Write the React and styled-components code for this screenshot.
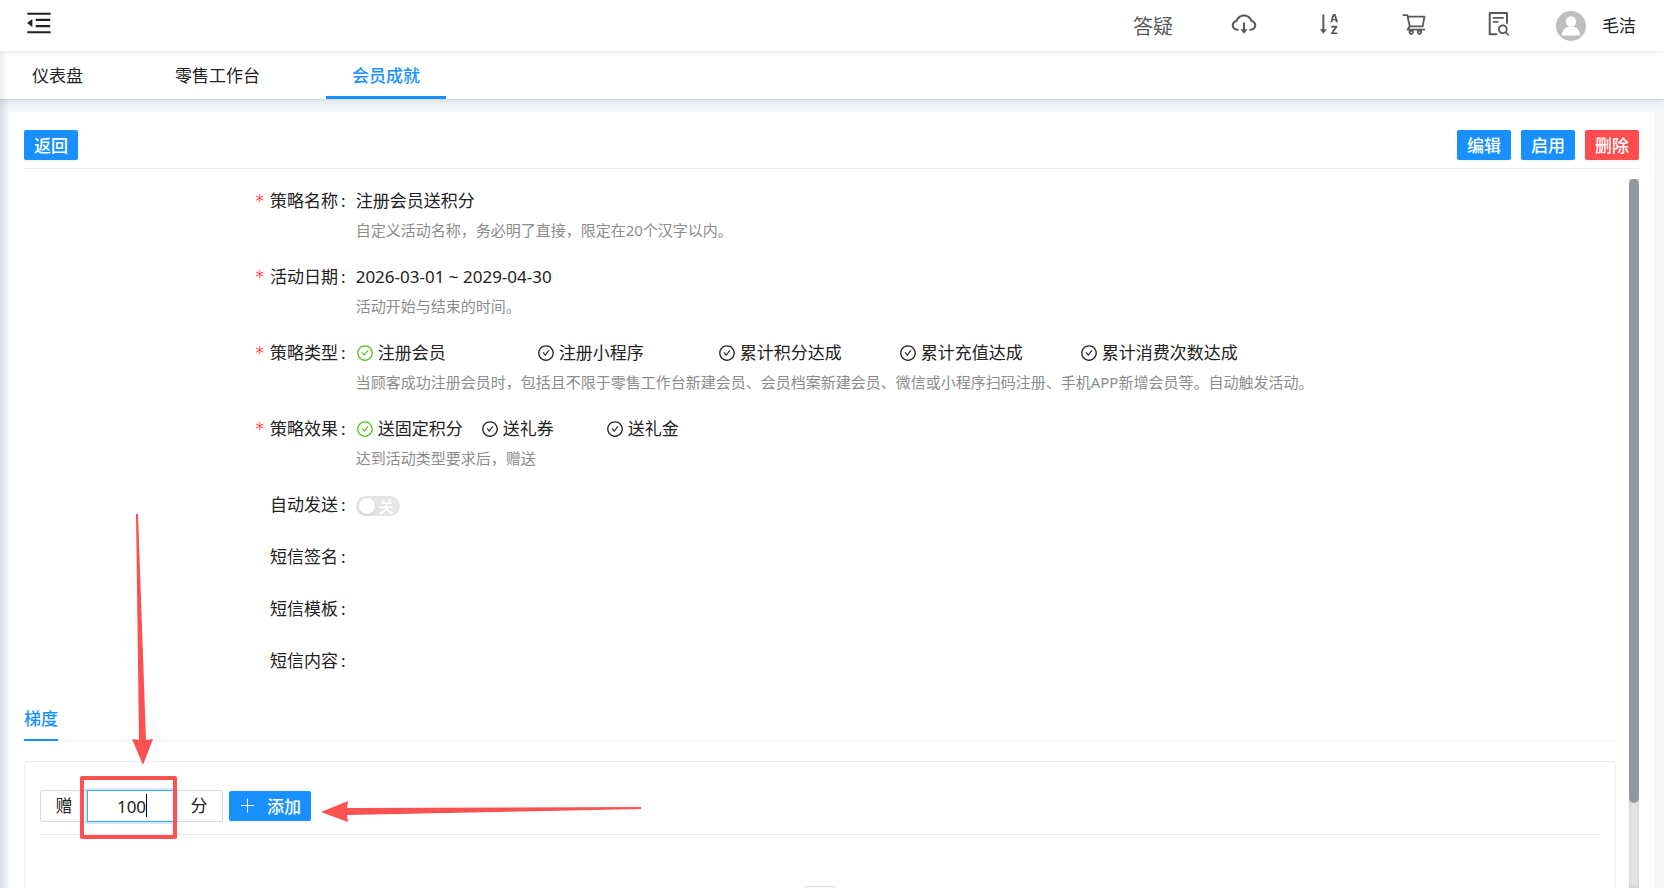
import React, { useState } from 'react';
import styled, { createGlobalStyle, css, ThemeProvider } from 'styled-components';
import {
    AiOutlineCheckCircle,
    AiOutlineCloudDownload,
    AiOutlineFileSearch,
    AiOutlineMenuFold,
    AiOutlineShoppingCart,
    AiOutlineSortAscending,
} from 'react-icons/ai';

const theme = {
    colors: {
        primary: '#1890ff',
        danger: '#ff4d4f',
        success: '#52c41a',
        mark: '#fa5151',
        text: '#222222',
        icon: '#595959',
        hint: '#8c8c8c',
        line: '#ededed',
        border: '#d9d9d9',
        page: '#f4f6fa',
    },
    sizes: {
        hint: '15px',
        body: '17px',
        title: '20px',
        icon: '28px',
    },
};

const GlobalStyle = createGlobalStyle`
  *, *::before, *::after {
    box-sizing: border-box;
  }
  body {
    margin: 0;
    font-family: 'Noto Sans', 'Noto Sans CJK SC', sans-serif;
    font-size: ${theme.sizes.body};
    color: ${theme.colors.text};
  }
  button, input {
    font: inherit;
    color: inherit;
  }
`;

const Page = styled.div`
  display: flex;
  flex-direction: column;
  height: 100vh;
  overflow: hidden;
  background: ${({ theme }) => theme.colors.page};
`;

const Header = styled.header`
  position: relative;
  z-index: 1;
  display: flex;
  align-items: center;
  flex: none;
  height: 51px;
  padding: 0 28px 0 24px;
  background: #fff;
  box-shadow: 0 1px 4px rgba(0, 21, 41, 0.1);
`;

const IconButton = styled.button`
  display: flex;
  justify-content: center;
  width: 28px;
  padding: 0 0 3px;
  border: 0;
  background: none;
  color: ${({ theme }) => theme.colors.icon};
  font-size: ${({ theme, $size }) => $size || theme.sizes.icon};
  cursor: pointer;
`;

const FoldButton = styled(IconButton)`
  width: 30px;
  margin-right: auto;
  padding-bottom: 5px;
  color: ${({ theme }) => theme.colors.text};
`;

const Tools = styled.nav`
  display: flex;
  align-items: center;
  gap: 57px;
`;

const HelpLink = styled.a`
  color: ${({ theme }) => theme.colors.icon};
  font-size: ${({ theme }) => theme.sizes.title};
  text-decoration: none;
`;

const User = styled.div`
  display: flex;
  align-items: center;
  gap: 16px;
  margin-left: 43px;
`;

const UserName = styled.span`
  padding-bottom: 3px;
`;

const TabBar = styled.nav`
  display: flex;
  flex: none;
  gap: 40px;
  height: 48px;
  padding-left: 6px;
  background: linear-gradient(to right, rgba(0, 21, 41, 0.08), transparent 8px) #fff;
  box-shadow: 0 1px 0 #d5d9df, 0 2px 8px rgba(0, 21, 41, 0.12);
`;

const Tab = styled.a`
  height: 48px;
  padding: 0 26px;
  line-height: 50px;
  color: inherit;
  text-decoration: none;
  ${({ $active, theme }) =>
        $active &&
        css`
      color: ${theme.colors.primary};
      font-weight: 500;
      box-shadow: inset 0 -3px ${theme.colors.primary};
    `}
`;

const Main = styled.main`
  display: flex;
  flex: 1;
  min-height: 0;
  padding: 13px 10px 0 9px;
  background: linear-gradient(to right, rgba(0, 21, 41, 0.12), transparent 9px);
`;

const Card = styled.section`
  display: flex;
  flex-direction: column;
  flex: 1;
  min-width: 0;
  padding: 18px 15px 0;
  background: #fff;
`;

const Actions = styled.div`
  display: flex;
  flex: none;
  gap: 10px;
  padding-bottom: 8px;
  border-bottom: 1px solid ${({ theme }) => theme.colors.line};
`;

const Button = styled.button`
  display: inline-flex;
  align-items: center;
  gap: 11px;
  height: 30px;
  padding: 0 10px 2px;
  border: 0;
  border-radius: 2px;
  background: ${({ theme, $danger }) => ($danger ? theme.colors.danger : theme.colors.primary)};
  box-shadow: 0 2px 0 rgba(0, 0, 0, 0.04);
  color: #fff;
  font-weight: 500;
  cursor: pointer;
`;

const BackButton = styled(Button)`
  margin-right: auto;
`;

const Body = styled.div`
  display: flex;
  flex: 1;
  gap: 13px;
  min-height: 0;
  margin-top: 10px;
`;

const Content = styled.div`
  flex: 1;
  min-width: 0;
  padding-top: 4px;
  overflow: hidden;
`;

const Scrollbar = styled.div`
  width: 10px;
  background: #e6e6e6;
  box-shadow: inset 0 0 5px rgba(0, 0, 0, 0.15);
`;

const Thumb = styled.div`
  height: 88%;
  border-radius: 5px;
  background: #92969e;
`;

const Row = styled.div`
  display: grid;
  grid-template-columns: 5fr 19fr;
  margin-bottom: ${({ $hinted }) => ($hinted ? '18px' : '16px')};
  line-height: 36px;
`;

const Label = styled.label`
  padding-right: 10px;
  text-align: right;
  &::after {
    content: ':';
    margin-left: 3px;
  }
  ${({ $required, theme }) =>
        $required &&
        css`
      &::before {
        content: '*';
        margin-right: 6px;
        color: ${theme.colors.danger};
        font-family: 'DejaVu Sans', sans-serif;
      }
    `}
`;

const Value = styled.div`
  min-height: 36px;
`;

const Hint = styled.p`
  margin: 0;
  color: ${({ theme }) => theme.colors.hint};
  font-size: ${({ theme }) => theme.sizes.hint};
  line-height: 22px;
`;

const Options = styled.ul`
  display: flex;
  margin: 0;
  padding: 0;
  list-style: none;
`;

const Option = styled.li`
  display: flex;
  align-items: center;
  gap: 4px;
  flex: 0 0 ${({ $width }) => $width};
  white-space: nowrap;
  svg {
    flex: none;
    font-size: 18px;
    color: ${({ theme, $checked }) => ($checked ? theme.colors.success : theme.colors.text)};
  }
`;

const SwitchTrack = styled.label`
  display: inline-flex;
  align-items: center;
  justify-content: space-between;
  width: 44px;
  height: 20px;
  padding: 0 6px 0 3px;
  border-radius: 10px;
  background: #e5e5e5;
  color: #fff;
  font-size: ${({ theme }) => theme.sizes.hint};
  font-weight: 500;
  line-height: 20px;
  vertical-align: middle;
`;

const SwitchInput = styled.input`
  appearance: none;
  width: 16px;
  height: 16px;
  margin: 0;
  border-radius: 50%;
  background: #fff;
  box-shadow: 0 2px 4px rgba(0, 35, 11, 0.1);
`;

const TierTabs = styled.div`
  display: flex;
  margin-bottom: 20px;
  padding-top: 11px;
  border-bottom: 1px solid ${({ theme }) => theme.colors.line};
`;

const TierTab = styled.button`
  margin-bottom: -1px;
  padding: 0 0 7px;
  border: 0;
  border-bottom: 2px solid ${({ theme }) => theme.colors.primary};
  background: none;
  color: ${({ theme }) => theme.colors.primary};
  font-weight: 500;
  line-height: 26px;
`;

const Panel = styled.div`
  padding: 28px 15px 0;
  border: 1px solid ${({ theme }) => theme.colors.line};
  border-radius: 2px;
`;

const TierForm = styled.form`
  position: relative;
  display: flex;
  align-items: center;
  gap: 6px;
  padding-bottom: 12px;
  border-bottom: 1px solid #e8e8e8;
`;

const InputGroup = styled.div`
  position: relative;
  display: flex;
  height: 32px;
`;

const Addon = styled.label`
  width: 48px;
  border: 1px solid ${({ theme }) => theme.colors.border};
  border-radius: 2px;
  line-height: 30px;
  text-align: center;
`;

const PointsInput = styled.input`
  width: 89px;
  margin: 0 -1px;
  padding: 0;
  border: 1px solid #40a9ff;
  outline: 0;
  background: #fff;
  box-shadow: 0 0 0 2px rgba(24, 144, 255, 0.2);
  text-align: center;
  caret-color: transparent;
  z-index: 1;
`;

const Caret = styled.span`
  position: absolute;
  z-index: 1;
  top: 4px;
  left: 106px;
  width: 1px;
  height: 23px;
  background: #000;
`;

const Highlight = styled.div`
  position: absolute;
  z-index: 2;
  top: -14px;
  left: 40px;
  width: 97px;
  height: 63px;
  border: 4px solid ${({ theme }) => theme.colors.mark};
  border-radius: 2px;
  pointer-events: none;
`;

const Arrows = styled.svg`
  position: absolute;
  top: -276px;
  left: 90px;
  fill: ${({ theme }) => theme.colors.mark};
  pointer-events: none;
`;

const Empty = styled.div`
  display: flex;
  justify-content: center;
  padding-top: 51px;
`;

const types = ['注册会员', '注册小程序', '累计积分达成', '累计充值达成', '累计消费次数达成'];
const effects = ['送固定积分', '送礼券', '送礼金'];

const Field = ({ label, required, hint, htmlFor, children }) => (
    <Row $hinted={Boolean(hint)}>
        <Label as={htmlFor ? 'label' : 'div'} htmlFor={htmlFor} $required={required}>
            {label}
        </Label>
        <div>
            <Value>{children}</Value>
            {hint && <Hint>{hint}</Hint>}
        </div>
    </Row>
);

const CheckList = ({ items, selected, width }) => (
    <Options>
        {items.map((item) => (
            <Option key={item} $width={width} $checked={item === selected}>
                <AiOutlineCheckCircle />
                {item}
            </Option>
        ))}
    </Options>
);

const Avatar = () => (
    <svg width="30" height="30" viewBox="0 0 30 30">
        <circle cx="15" cy="15" r="15" fill="#bfbfbf" />
        <circle cx="15" cy="10.500" r="5.200" fill="#fff" />
        <path d="M6 24.500c0-5 3-8 6.500-9q2.500 1.200 5 0c3.500 1 6.500 4 6.500 9z" fill="#fff" />
    </svg>
);

const PlusIcon = () => (
    <svg width="17" height="17" viewBox="0 0 17 17" stroke="currentColor">
        <path d="M8.500 1.500v14M2 8.500h13" />
    </svg>
);

const App = () => {
    const [points, setPoints] = useState('100');

    return (
        <ThemeProvider theme={theme}>
            <GlobalStyle />
            <Page>
                <Header>
                    <FoldButton $size="30px" aria-label="折叠菜单">
                        <AiOutlineMenuFold />
                    </FoldButton>
                    <Tools>
                        <HelpLink href="#help">答疑</HelpLink>
                        <IconButton aria-label="下载"><AiOutlineCloudDownload /></IconButton>
                        <IconButton aria-label="排序"><AiOutlineSortAscending /></IconButton>
                        <IconButton $size="26px" aria-label="购物车"><AiOutlineShoppingCart /></IconButton>
                        <IconButton aria-label="查询"><AiOutlineFileSearch /></IconButton>
                    </Tools>
                    <User>
                        <Avatar />
                        <UserName>毛洁</UserName>
                    </User>
                </Header>
                <TabBar>
                    <Tab href="#dashboard">仪表盘</Tab>
                    <Tab href="#retail">零售工作台</Tab>
                    <Tab href="#achievement" $active>会员成就</Tab>
                </TabBar>
                <Main>
                    <Card>
                        <Actions>
                            <BackButton>返回</BackButton>
                            <Button>编辑</Button>
                            <Button>启用</Button>
                            <Button $danger>删除</Button>
                        </Actions>
                        <Body>
                            <Content>
                                <Field label="策略名称" required hint="自定义活动名称，务必明了直接，限定在20个汉字以内。">
                                    注册会员送积分
                                </Field>
                                <Field label="活动日期" required hint="活动开始与结束的时间。">
                                    2026-03-01 ~ 2029-04-30
                                </Field>
                                <Field
                                    label="策略类型"
                                    required
                                    hint="当顾客成功注册会员时，包括且不限于零售工作台新建会员、会员档案新建会员、微信或小程序扫码注册、手机APP新增会员等。自动触发活动。"
                                >
                                    <CheckList items={types} selected="注册会员" width="181px" />
                                </Field>
                                <Field label="策略效果" required hint="达到活动类型要求后，赠送">
                                    <CheckList items={effects} selected="送固定积分" width="125px" />
                                </Field>
                                <Field label="自动发送" htmlFor="auto-send">
                                    <SwitchTrack>
                                        <SwitchInput id="auto-send" type="checkbox" role="switch" disabled />
                                        关
                                    </SwitchTrack>
                                </Field>
                                <Field label="短信签名" />
                                <Field label="短信模板" />
                                <Field label="短信内容" />
                                <TierTabs role="tablist">
                                    <TierTab role="tab" aria-selected="true">梯度</TierTab>
                                </TierTabs>
                                <Panel>
                                    <TierForm onSubmit={(e) => e.preventDefault()}>
                                        <InputGroup>
                                            <Addon htmlFor="points">赠</Addon>
                                            <PointsInput
                                                id="points"
                                                value={points}
                                                onChange={(e) => setPoints(e.target.value)}
                                            />
                                            <Addon htmlFor="points">分</Addon>
                                            <Caret />
                                            <Highlight />
                                        </InputGroup>
                                        <Button type="submit">
                                            <PlusIcon />
                                            添加
                                        </Button>
                                        <Arrows width="520" height="320" viewBox="0 0 520 320">
                                            <path d="M6 0h2l8 226 7-1-10 26-11-26 7 1z" />
                                            <path d="M511 293v2l-294 6 1 7-27-10 27-11-1 7z" />
                                        </Arrows>
                                    </TierForm>
                                    <Empty>
                                        <svg width="80" height="50" viewBox="0 0 80 50" fill="none" stroke="#d9d9d9">
                                            <ellipse cx="40" cy="41" rx="40" ry="8" fill="#f5f5f5" stroke="none" />
                                            <path d="M69 16L56 2Q55 .5 53 .5H27Q25 .5 24 2L11 16v11h58z" />
                                            <path d="M52 20c0-2 1-4 3-4h14v23c0 2-2 4-4 4H15c-2 0-4-2-4-4V16h14c2 0 3 2 3 4s1 4 3 4h18c2 0 3-2 3-4z" fill="#fafafa" />
                                        </svg>
                                    </Empty>
                                </Panel>
                            </Content>
                            <Scrollbar>
                                <Thumb />
                            </Scrollbar>
                        </Body>
                    </Card>
                </Main>
            </Page>
        </ThemeProvider>
    );
};

export default App;
